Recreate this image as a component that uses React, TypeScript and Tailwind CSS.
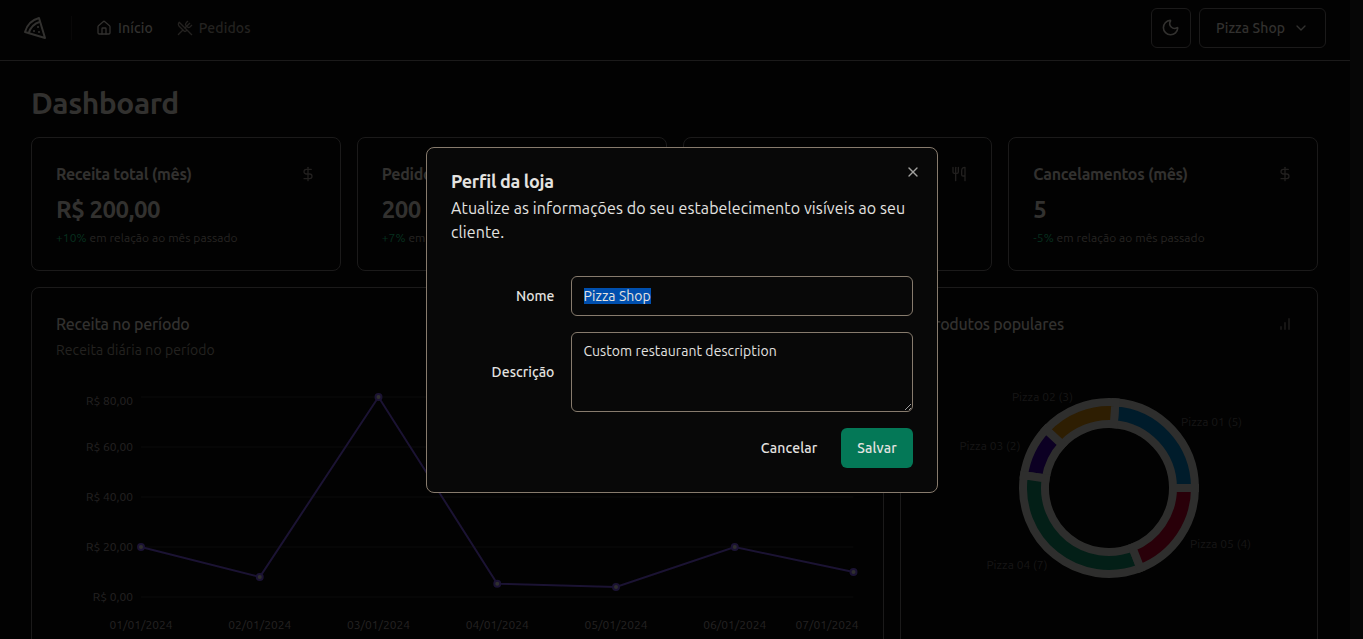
import type { ReactNode } from 'react';
import { ChevronDown, DollarSign, House, Moon, Utensils, UtensilsCrossed, X } from 'lucide-react';

function PizzaLogo() {
  return (
    <svg className="size-6" viewBox="0 0 24 24" fill="none" stroke="currentColor" strokeWidth={2} strokeLinecap="round" strokeLinejoin="round">
      <path d="M15 11h.01M11 15h.01M16 16h.01" />
      <path d="m2 16 20 6-6-20A20 20 0 0 0 2 16" />
      <path d="M5.71 17.11a17.04 17.04 0 0 1 11.4-11.4" />
    </svg>
  );
}

function BarsIcon() {
  return (
    <svg className="size-4 text-[#22201f]" viewBox="0 0 24 24" fill="none" stroke="currentColor" strokeWidth={2} strokeLinecap="round" strokeLinejoin="round">
      <path d="M12 20V10M18 20V4M6 20v-4" />
    </svg>
  );
}

function Header() {
  return (
    <header className="flex h-[61px] items-center gap-6 border-b border-[#1b1a1a] pr-6 pb-1 pl-[23px]">
      <PizzaLogo />
      <div className="h-6 w-px bg-[#090808]" />
      <nav className="flex items-center gap-6 text-sm font-medium">
        <a className="flex items-center gap-1.5 tracking-[0.12px]">
          <House className="size-4" />
          Início
        </a>
        <a className="flex items-center gap-1.5 tracking-[0.12px] text-[#242220]">
          <UtensilsCrossed className="size-4" />
          Pedidos
        </a>
      </nav>
      <div className="ml-auto flex items-center gap-2">
        <button className="flex size-10 items-center justify-center rounded-md border border-[#1b1a1a]">
          <Moon className="size-[19.2px]" />
        </button>
        <button className="flex h-10 w-[127px] items-center gap-2 rounded-md border border-[#1b1a1a] px-4 text-sm font-medium tracking-[0.1px] whitespace-nowrap">
          Pizza Shop
          <ChevronDown className="size-4 shrink-0" />
        </button>
      </div>
    </header>
  );
}

interface MetricProps {
  title: string;
  value: string;
  change: string;
  icon: ReactNode;
}

function MetricCard({ title, value, change, icon }: MetricProps) {
  return (
    <section className="h-[134px] rounded-lg border border-[#1b1a1a] p-6 whitespace-nowrap">
      <div className="flex items-center justify-between pb-2">
        <h2 className="text-base font-bold tracking-[-0.3px]">{title}</h2>
        <span className="text-[#22201f]">{icon}</span>
      </div>
      <div className="space-y-1">
        <p className="text-2xl font-bold tracking-[-0.5px]">{value}</p>
        <p className="text-xs tracking-[0.07px] text-[#272523]">
          <span className="text-[#07301f]">{change}</span> em relação ao mês passado
        </p>
      </div>
    </section>
  );
}

const revenue = [
  { date: '01/01/2024', value: 20 },
  { date: '02/01/2024', value: 8 },
  { date: '03/01/2024', value: 80 },
  { date: '04/01/2024', value: 5.3 },
  { date: '05/01/2024', value: 4 },
  { date: '06/01/2024', value: 20 },
  { date: '07/01/2024', value: 10 },
];

function RevenueChart() {
  const points = revenue.map((item, i) => ({
    x: 85 + i * 118.75,
    y: 213 - item.value * 2.5,
    date: item.date,
  }));
  return (
    <svg className="mt-6 block" width="803" height="255" viewBox="0 0 803 255" fontSize="12">
      {[0, 20, 40, 60, 80].map((tick) => (
        <g key={tick}>
          <line x1="85" x2="797.5" y1={213 - tick * 2.5} y2={213 - tick * 2.5} stroke="#0b0a0a" />
          <text x="77" y={(tick === 80 ? 216.5 : 213) + 4 - tick * 2.5} textAnchor="end" fill="#252322">
            {`R$ ${tick},00`}
          </text>
        </g>
      ))}
      <polyline points={points.map((p) => `${p.x},${p.y}`).join(' ')} fill="none" stroke="#1b1333" strokeWidth="2" />
      {points.map((p, i) => (
        <g key={p.date}>
          <circle cx={p.x} cy={p.y} r="3" fill="#2f2f2e" stroke="#1b1333" strokeWidth="2" />
          <text x={i === 6 ? 771 : p.x} y="245" textAnchor="middle" fill="#252322">
            {p.date}
          </text>
        </g>
      ))}
    </svg>
  );
}

const products = [
  { name: 'Pizza 01', amount: 5, color: '#001c2b', x: 256, y: 42, anchor: 'start' as const },
  { name: 'Pizza 02', amount: 3, color: '#2e1e02', x: 148, y: 17, anchor: 'end' as const },
  { name: 'Pizza 03', amount: 2, color: '#0c0023', x: 95.5, y: 66, anchor: 'end' as const },
  { name: 'Pizza 04', amount: 7, color: '#031f17', x: 122.5, y: 185, anchor: 'end' as const },
  { name: 'Pizza 05', amount: 4, color: '#290009', x: 265, y: 164, anchor: 'start' as const },
];

function ringSlice(start: number, end: number) {
  const cx = 184;
  const cy = 104;
  const at = (r: number, a: number) => `${(cx + r * Math.cos(a)).toFixed(2)} ${(cy - r * Math.sin(a)).toFixed(2)}`;
  return `M${at(86, start)}A86 86 0 0 0 ${at(86, end)}L${at(64, end)}A64 64 0 0 1 ${at(64, start)}Z`;
}

function ProductsChart() {
  const unit = (Math.PI * 2) / 21;
  let sum = 0;
  return (
    <svg className="mt-12 block" width="368" height="255" viewBox="0 0 368 255" fontSize="12" letterSpacing="0.04">
      {products.map((item) => {
        const start = sum * unit;
        sum += item.amount;
        return (
          <g key={item.name}>
            <path d={ringSlice(start, sum * unit)} fill={item.color} stroke="#2e2e2d" strokeWidth="8" />
            <text x={item.x} y={item.y} textAnchor={item.anchor} fill="#171616">
              {`${item.name} (${item.amount})`}
            </text>
          </g>
        );
      })}
    </svg>
  );
}

function Dashboard() {
  return (
    <main className="flex flex-col gap-4 pt-6 pr-8 pl-[31px]">
      <h1 className="h-9 text-3xl leading-9 font-bold tracking-[-0.5px]">Dashboard</h1>
      <div className="grid grid-cols-4 gap-4">
        <MetricCard title="Receita total (mês)" value="R$ 200,00" change="+10%" icon={<DollarSign className="size-4" />} />
        <MetricCard title="Pedidos (mês)" value="200" change="+7%" icon={<Utensils className="size-4" />} />
        <MetricCard title="Pedidos (dia)" value="20" change="-4%" icon={<Utensils className="size-4" />} />
        <MetricCard title="Cancelamentos (mês)" value="5" change="-5%" icon={<DollarSign className="size-4" />} />
      </div>
      <div className="grid grid-cols-9 gap-4">
        <section className="col-span-6 h-[380px] rounded-lg border border-[#1b1a1a] p-6">
          <h2 className="text-base font-medium tracking-[-0.24px]">Receita no período</h2>
          <p className="mt-1 text-sm tracking-[0.1px] text-[#242220]">Receita diária no período</p>
          <RevenueChart />
        </section>
        <section className="col-span-3 h-[380px] rounded-lg border border-[#1b1a1a] p-6">
          <div className="flex items-center justify-between">
            <h2 className="text-base font-medium tracking-[-0.27px]">Produtos populares</h2>
            <BarsIcon />
          </div>
          <ProductsChart />
        </section>
      </div>
    </main>
  );
}

function ProfileDialog() {
  return (
    <div role="dialog" className="relative flex h-[346px] w-[512px] flex-col gap-4 rounded-lg border border-[#877b6d] bg-[#080808] p-6 text-[#e4e3e0]">
      <div>
        <h2 className="text-lg leading-none font-semibold tracking-[-0.33px]">Perfil da loja</h2>
        <p className="mt-1.5 text-base tracking-[0.1px]">
          Atualize as informações do seu estabelecimento visíveis ao seu cliente.
        </p>
      </div>
      <form className="flex flex-col gap-4 pt-4">
        <div className="grid grid-cols-4 items-center gap-4">
          <label className="text-right text-sm font-medium">Nome</label>
          <div className="col-span-3 flex h-10 items-center rounded-md border border-[#877b6d] px-3 text-sm">
            <span className="bg-[#004fae] leading-4 tracking-[0.06px]">Pizza Shop</span>
          </div>
        </div>
        <div className="grid grid-cols-4 items-center gap-4">
          <label className="text-right text-sm font-medium tracking-[0.08px]">Descrição</label>
          <textarea
            className="col-span-3 block h-20 w-full resize-y rounded-md border border-[#877b6d] bg-transparent px-3 py-2 text-sm tracking-[0.08px] [color-scheme:dark]"
            defaultValue="Custom restaurant description"
          />
        </div>
        <div className="flex justify-end gap-2 text-sm font-medium tracking-[0.15px]">
          <button type="button" className="h-10 rounded-md pr-[15.5px] pl-4">Cancelar</button>
          <button type="button" className="h-10 w-[72px] rounded-md bg-[#047857] text-center">Salvar</button>
        </div>
      </form>
      <button className="absolute top-4 right-4 opacity-70">
        <X className="size-4" />
      </button>
    </div>
  );
}

export default function App() {
  return (
    <div className="relative flex h-[639px] w-full overflow-hidden bg-[#020202] font-['Ubuntu','Noto_Sans',sans-serif] text-[#32312f]">
      <div className="min-w-0 flex-1">
        <Header />
        <Dashboard />
      </div>
      <div className="w-[13px] shrink-0 bg-[#060606]" />
      <div className="absolute inset-0 flex items-center justify-center pl-px">
        <ProfileDialog />
      </div>
    </div>
  );
}
